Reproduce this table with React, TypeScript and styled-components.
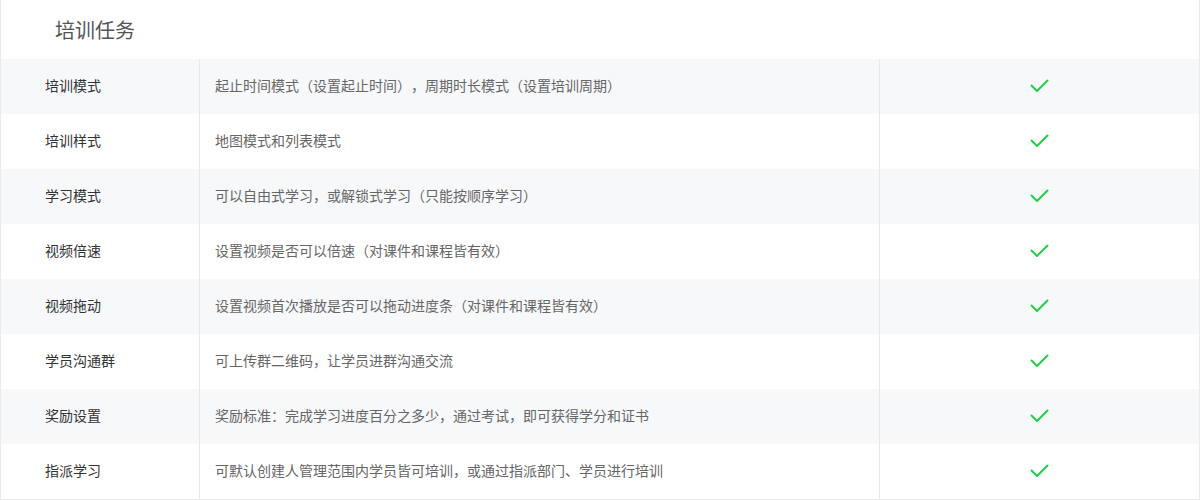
import React from "react";
import styled, { createGlobalStyle } from "styled-components";

const Global = createGlobalStyle`
  html, body { margin: 0; padding: 0; background: #fff; }
  body {
    font-family: "Noto Sans CJK SC", "Noto Sans", sans-serif;
    text-spacing-trim: space-all;
  }
`;

const Card = styled.div`
  width: 1200px;
  box-sizing: border-box;
  border: 1px solid #ebebeb;
  border-top: none;
  background: #fff;
`;

const Header = styled.div`
  height: 59px;
  box-sizing: border-box;
  padding: 0 0 0 54px;
  display: flex;
  align-items: center;
  font-size: 20px;
  color: #555;
`;

const Row = styled.div<{ $striped: boolean }>`
  display: grid;
  grid-template-columns: 199px 680px 1fr;
  height: 55px;
  background: ${(p) => (p.$striped ? "#f7f8fa" : "#fff")};
`;

const LabelCell = styled.div`
  display: flex;
  align-items: center;
  padding: 0 0 3px 44px;
  border-right: 1px solid #e8e8e8;
  font-size: 14px;
  color: #333;
`;

const DescCell = styled.div`
  display: flex;
  align-items: center;
  padding: 0 0 3px 15px;
  border-right: 1px solid #e8e8e8;
  font-size: 14px;
  color: #666;
  text-spacing-trim: space-all;
`;

const CheckCell = styled.div`
  display: flex;
  align-items: center;
  justify-content: center;
  padding-bottom: 2px;
`;

const CheckIcon = () => (
  <svg width="19" height="14" viewBox="0 0 19 14" fill="none">
    <polyline
      points="1.5,6.5 7,12 17.5,1.5"
      stroke="#22d046"
      strokeWidth="2"
      strokeLinecap="round"
      strokeLinejoin="round"
    />
  </svg>
);

const rows: [string, string][] = [
  ["培训模式", "起止时间模式（设置起止时间），周期时长模式（设置培训周期）"],
  ["培训样式", "地图模式和列表模式"],
  ["学习模式", "可以自由式学习，或解锁式学习（只能按顺序学习）"],
  ["视频倍速", "设置视频是否可以倍速（对课件和课程皆有效）"],
  ["视频拖动", "设置视频首次播放是否可以拖动进度条（对课件和课程皆有效）"],
  ["学员沟通群", "可上传群二维码，让学员进群沟通交流"],
  ["奖励设置", "奖励标准：完成学习进度百分之多少，通过考试，即可获得学分和证书"],
  ["指派学习", "可默认创建人管理范围内学员皆可培训，或通过指派部门、学员进行培训"],
];

export default function App() {
  return (
    <>
      <Global />
      <Card>
        <Header>培训任务</Header>
        {rows.map(([label, desc], i) => (
          <Row key={label} $striped={i % 2 === 0}>
            <LabelCell>{label}</LabelCell>
            <DescCell>{desc}</DescCell>
            <CheckCell>
              <CheckIcon />
            </CheckCell>
          </Row>
        ))}
      </Card>
    </>
  );
}
